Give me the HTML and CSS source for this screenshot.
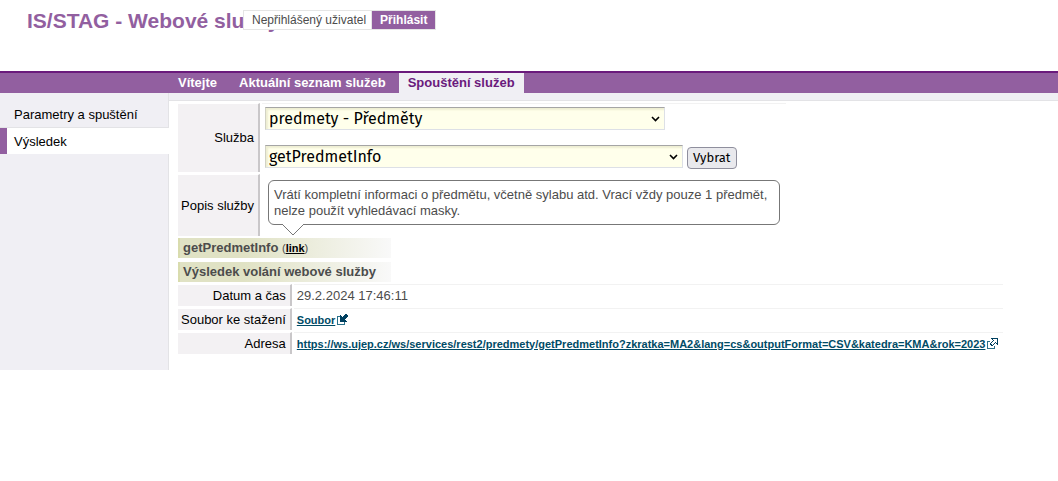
FILE: index.html
```html
<!DOCTYPE html>
<html lang="cs">
<head>
<meta charset="utf-8">
<title>IS/STAG - Webové služby</title>
<link rel="stylesheet" href="styles.css">
</head>
<body>
<header class="header">
  <h1 class="title">IS/STAG - Webové služby</h1>
  <div class="login"><span class="login-user">Nepřihlášený uživatel</span><a class="login-link" href="#">Přihlásit</a></div>
</header>
<nav class="nav">
  <a class="tab" href="#">Vítejte</a>
  <a class="tab" href="#">Aktuální seznam služeb</a>
  <a class="tab tab-active" href="#">Spouštění služeb</a>
</nav>
<div class="page">
  <nav class="side">
    <a class="side-item" href="#">Parametry a spuštění</a>
    <a class="side-item side-active" href="#">Výsledek</a>
  </nav>
  <main class="main">
    <table class="form">
      <tr>
        <th scope="row"><label for="service">Služba</label></th>
        <td class="fields">
          <div class="field">
            <select class="select" id="service"><option>predmety - Předměty</option></select>
          </div>
          <div class="field">
            <select class="select select-wide" aria-label="Metoda služby"><option>getPredmetInfo</option></select>
            <button class="button" type="button">Vybrat</button>
          </div>
        </td>
      </tr>
      <tr>
        <th scope="row">Popis služby</th>
        <td class="about">
          <div class="bubble">Vrátí kompletní informaci o předmětu, včetně sylabu atd. Vrací vždy pouze 1 předmět, nelze použít vyhledávací masky.
            <svg class="pointer" width="24" height="13" viewBox="0 0 24 13"><path d="M0 0H24L12 12Z" fill="#fff"/><path d="M1 1L12 12L23 1" fill="none" stroke="#777"/></svg>
          </div>
        </td>
      </tr>
    </table>
    <h2 class="heading">getPredmetInfo <small>(<a href="#">link</a>)</small></h2>
    <h2 class="heading">Výsledek volání webové služby</h2>
    <table class="form results">
      <tr><th scope="row">Datum a čas</th><td>29.2.2024 17:46:11</td></tr>
      <tr><th scope="row">Soubor ke stažení</th><td><a class="link" href="#"><span>Soubor</span><svg width="11" height="11" viewBox="0 0 11 11" shape-rendering="crispEdges"><path d="M3 2.500H.5V10.500H7.500V8" fill="none" stroke="#2b718a"/><path d="M3 1H4V2H5V3H6V2H7V1H8V0H10V1H11V3H10V4H9V5H8V6H9V7H10V8H3Z" fill="#004060"/></svg></a></td></tr>
      <tr><th scope="row">Adresa</th><td><a class="link" href="#"><span>https://ws.ujep.cz/ws/services/rest2/predmety/getPredmetInfo?zkratka=MA2&amp;lang=cs&amp;outputFormat=CSV&amp;katedra=KMA&amp;rok=2023</span><svg width="11" height="11" viewBox="0 0 11 11" shape-rendering="crispEdges"><path d="M3 3.500H.5V10.500H7.500V8" fill="none" stroke="#2b718a"/><path d="M4 0H11V7H10V6H9V5H8V6H7V7H6V8H4V7H3V5H4V4H5V3H6V2H5V1H4Z" fill="#004060"/><path d="M6 1H10V5H9V4H8V5H7V6H6V7H5V6H4V5H5V4H6V3H7V2H6Z" fill="#fff"/></svg></a></td></tr>
    </table>
  </main>
</div>
</body>
</html>
```
FILE: styles.css
```css
* { box-sizing: border-box; }
body {
  margin: 0;
  background: #fff;
  color: #4c4c4c;
  font: 13px/16px "Liberation Sans", Arial, sans-serif;
}
.header {
  position: relative;
  padding: 8px 27px 37px;
}
.title {
  margin: 0;
  color: #925fa0;
  font-size: 21px;
  line-height: 26px;
}
.login {
  position: absolute;
  left: 243px;
  top: 10px;
  display: flex;
  border: 1px solid #e5e5e5;
  background: #fff;
  font-size: 12px;
  line-height: 18px;
}
.login-user { padding: 0 5px 0 8px; border-right: 1px solid #e5e5e5; }
.login-link {
  padding: 0 8px;
  background: #925fa0;
  color: #fff;
  font-weight: bold;
  text-decoration: none;
}
.nav {
  display: flex;
  gap: 4px;
  padding-left: 169px;
  border-top: 2px solid #6a1a7c;
  background: #925fa0;
}
.tab {
  padding: 0 9px;
  color: #fff;
  font-weight: bold;
  line-height: 20px;
  text-decoration: none;
}
.tab-active { background: #f0eff4; color: #6a1a7c; }
.page {
  display: grid;
  grid-template-columns: 169px 1fr;
}
.side {
  padding-top: 9px;
  border-right: 1px solid #e3e3e6;
  background: #f0eff4;
}
.side-item {
  display: block;
  padding: 5px 7px 4px 14px;
  border-bottom: 1px solid #e3e3e6;
  color: #000;
  line-height: 16px;
  text-decoration: none;
}
.side-active {
  margin-right: -1px;
  padding: 6px 7px 4px;
  border-left: 7px solid #925fa0;
  border-bottom: 0;
  background: #fff;
}
.main {
  padding: 0 7px 14px;
}
.main::before {
  content: "";
  display: block;
  height: 7px;
  margin: 0 -7px;
  border-bottom: 1px solid #e3e3e6;
  background: #f0eff4;
}
.form { border-spacing: 2px; }
.form th {
  padding: 0 4px 0 3px;
  border-top: 1px solid #fff;
  border-right: 2px solid #c9c7c9;
  background: #f3f1f3;
  color: #000;
  font-weight: normal;
  text-align: right;
  white-space: nowrap;
}
.form td { padding: 0 5px 0 3px; border-top: 1px solid #f2f2f2; }
.form .fields { padding: 3px; }
.field { display: flex; align-items: flex-start; gap: 4px; }
.field + .field { margin-top: 15px; }
.select {
  width: 400px;
  height: 23px;
  padding: 0 20px 0 3px;
  appearance: none;
  border: 1px solid;
  border-color: #a5a5a5 #dde0e6 #dde0e6 #d2d2c4;
  border-radius: 0;
  background: #ffffeb url("data:image/svg+xml,%3Csvg xmlns='http://www.w3.org/2000/svg' width='9' height='6'%3E%3Cpath d='M1 1L4.500 4.500L8 1' fill='none' stroke='black' stroke-width='1.600'/%3E%3C/svg%3E") no-repeat right 4px center;
  box-shadow: inset 2px 2px 2px #eeeed2;
  color: #000;
  font: 16px "Fira Sans", "Noto Sans", sans-serif;
}
.select-wide { width: 418px; }
.button {
  height: 22px;
  margin-top: 2px;
  padding: 0 5px;
  border: 1px solid #8f8f9d;
  border-radius: 4px;
  background: #e9e9ed;
  color: #000;
  font: 13px/18px "Fira Sans", "Noto Sans", sans-serif;
}
.form .about { padding: 6px 6px 11px; border-top: 0; }
.bubble {
  position: relative;
  width: 512px;
  padding: 6px 5px 5px;
  border: 1px solid #777;
  border-radius: 6px;
}
.pointer {
  position: absolute;
  left: 12px;
  top: 42px;
}
.heading {
  width: 213px;
  margin: 0 2px 4px;
  padding-left: 3px;
  border-left: 2px solid #d9dcae;
  background: linear-gradient(to right, #e0e2c4 30%, #f9f9f9);
  font-size: 13px;
  line-height: 20px;
  white-space: nowrap;
}
.heading + .heading { margin-bottom: 0; }
.heading small { font-size: 11px; font-weight: normal; }
.heading a { color: #000; font-weight: bold; }
.results th, .results td { height: 22px; }
.link {
  display: flex;
  align-items: center;
  gap: 2px;
  color: #004b66;
  font-size: 11px;
  font-weight: bold;
  text-decoration: none;
}
.link span { text-decoration: underline; }
```
